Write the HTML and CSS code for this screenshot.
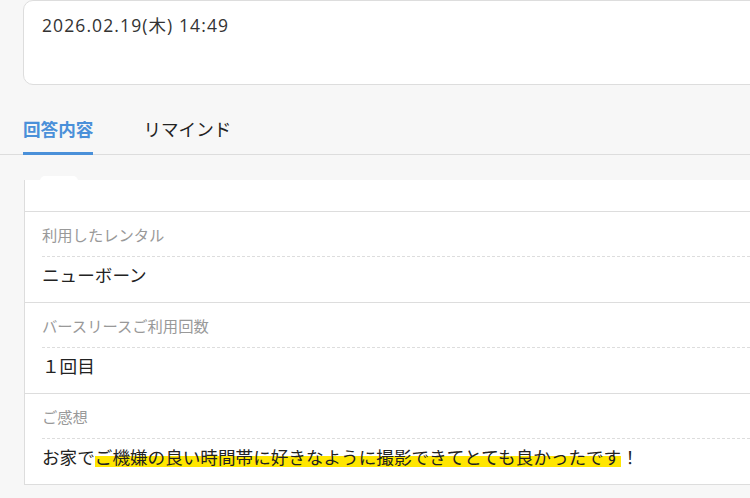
FILE: index.html
```html
<!DOCTYPE html>
<html lang="ja">
<head>
  <meta charset="UTF-8">
  <title>回答内容</title>
  <link rel="stylesheet" href="styles.css">
</head>
<body>

  <div class="date-card">2026.02.19(木) 14:49</div>

  <div class="tabs">
    <div class="tab active">回答内容</div>
    <div class="tab">リマインド</div>
  </div>

  <div class="answers">
    <div class="row top"></div>
    <div class="row">
      <div class="label">利用したレンタル</div>
      <div class="value">ニューボーン</div>
    </div>
    <div class="row">
      <div class="label">バースリースご利用回数</div>
      <div class="value">１回目</div>
    </div>
    <div class="row">
      <div class="label">ご感想</div>
      <div class="value">お家で<span class="marker">ご機嫌の良い時間帯に好きなように撮影できてとても良かったです</span>！</div>
    </div>
  </div>

</body>
</html>
```

FILE: styles.css
```css
body {
  margin: 0;
  background: #f7f7f7;
  font-family: "Open Sans", "Noto Sans CJK JP", sans-serif;
  color: #333;
  overflow: hidden;
}
.date-card {
  box-sizing: border-box;
  height: 85px;
  margin-left: 23px;
  margin-right: -20px;
  padding: 12px 18px;
  background: #fff;
  border: 1px solid #ddd;
  border-radius: 10px;
  font-size: 17.5px;
  line-height: 24px;
  letter-spacing: 1.1px;
}
.tabs {
  display: flex;
  gap: 50px;
  padding-left: 23px;
  border-bottom: 1px solid #ddd;
}
.tab {
  padding: 32px 0 11px;
  margin-bottom: -1px;
  font-size: 17.6px;
  line-height: 24px;
  color: #222;
  border-bottom: 3px solid transparent;
}
.tab.active {
  color: #4a90d9;
  font-weight: bold;
  border-bottom-color: #4a90d9;
}
.answers {
  position: relative;
  margin: 25px -20px 0 24px;
  background: #fff;
  border-left: 1px solid #ddd;
}
.answers::before {
  content: "";
  position: absolute;
  top: -4px;
  left: 15px;
  width: 38px;
  height: 10px;
  border-radius: 6px;
  background: #fff;
}
.row {
  padding: 13px 0 15px 17px;
  border-bottom: 1px solid #ddd;
}
.row.top {
  height: 32px;
  padding: 0;
  box-sizing: border-box;
}
.label {
  font-size: 15.3px;
  line-height: 20px;
  color: #999;
  padding-bottom: 11px;
  border-bottom: 1px dashed #ddd;
}
.value {
  margin-top: 6px;
  font-size: 17.6px;
  line-height: 24px;
  color: #222;
}
.marker {
  background: linear-gradient(transparent 45%, #ffe600 45%, #ffe600 92%, transparent 92%);
}
```
